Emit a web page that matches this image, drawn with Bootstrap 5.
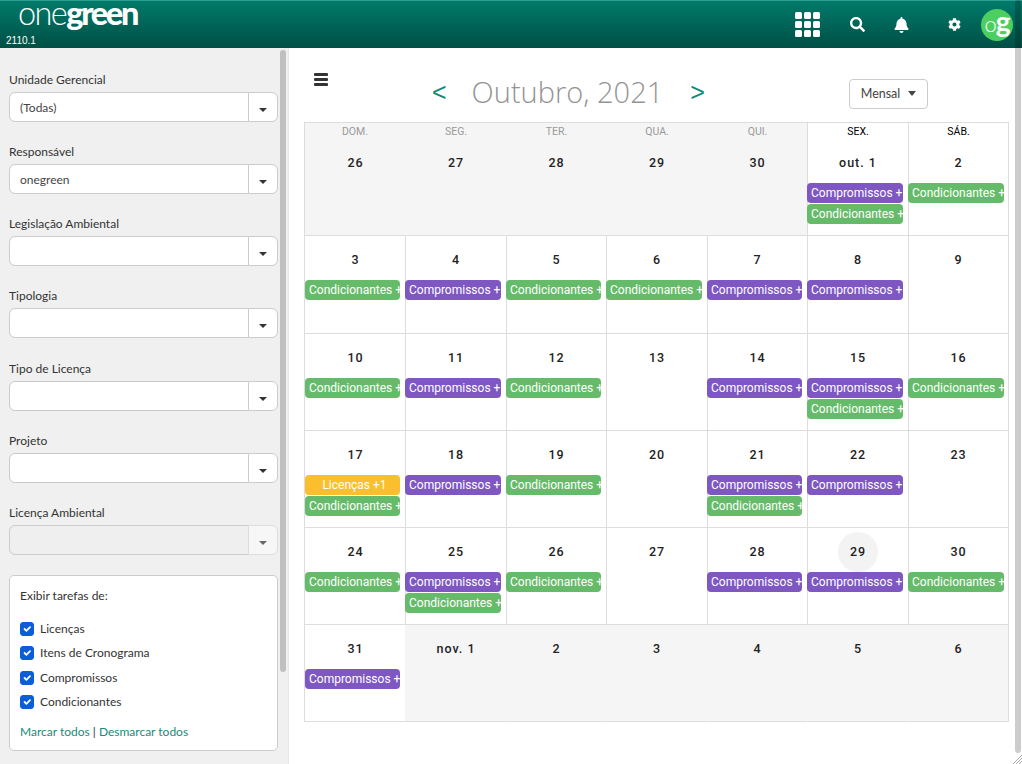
<!DOCTYPE html>
<html lang="pt-BR"><head><meta charset="utf-8"><title>onegreen</title>
<link href="https://cdn.jsdelivr.net/npm/bootstrap@5.3.0/dist/css/bootstrap.min.css" rel="stylesheet">
<style>
html,body{height:764px;overflow:hidden}
body{font-family:Lato,"Noto Sans",sans-serif;font-size:12px;color:#333;background:#fff}
.topo{height:48px;background:linear-gradient(#007a6a,#004f45);border-top:1px solid #2f9c8c;color:#fff}
.logo-wrap{width:170px;padding-left:18px}
.logotipo{font-family:Lato,sans-serif;font-size:32.5px;line-height:34px;letter-spacing:-1.6px;font-weight:300;margin-top:-5px;height:34px}
.logotipo b{font-weight:900;letter-spacing:-2.3px}
.versao{font-family:"Liberation Sans",sans-serif;font-size:10px;line-height:12px;margin:5px 0 0 -12px}
.ico-grade{display:grid;grid-template-columns:repeat(3,7px);gap:2px;width:25px;margin-right:30px}
.ico-grade i{height:7px;background:#fff;border-radius:1.5px}
.ico-topo{fill:#fff;display:block}
.ico-busca{margin-right:29px}
.ico-sino{margin-right:39px}
.avatar{width:32px;height:32px;border-radius:50%;background:#4ccf5f;font-family:Lato,sans-serif;font-size:22px;line-height:25px;letter-spacing:-1px;text-align:center;font-weight:300;margin-left:20px;margin-right:9px}
.avatar b{font-weight:700;font-size:28px}
.corpo{height:716px}
.lateral{width:289px;flex:none;background:#f0f0f0;border-right:1px solid #e6e6e6;padding:23px 10px 0 9px}
.campo{margin-bottom:21.17px}
.campo label{display:block;line-height:18px;margin-bottom:3px;color:#333}
.campo .form-control{height:30px;font-size:12px;padding:0 10px;border-color:#ccc;color:#444;box-shadow:none}
.campo .form-control:disabled{background:#efefef}
.campo .btn{width:30px;height:30px;padding:0;background:#fff;border-color:#ccc;color:#333;font-size:15px}
.campo .btn:disabled{background:#f7f7f7;color:#666;opacity:1;border-color:#ddd}
.campo .dropdown-toggle::after{vertical-align:.05em;margin:0}
.caixa{border-color:#ccc;border-radius:5px;padding:11px 10px 9px;height:176px;margin-top:-1px}
.caixa .titulo{line-height:18px;margin-bottom:11.5px}
.caixa .form-check{min-height:0;height:25px;padding-left:20px;margin:0;display:flex;align-items:center}
.caixa .form-check-input{width:14px;height:14px;margin:0 6px 0 -20px;flex:none}
.caixa .form-check-input:checked{background-color:#0b5ed7;border-color:#0b5ed7}
.caixa .form-check-label{line-height:18px}
.caixa .ligacoes{margin-top:9px;line-height:18px}
.caixa a{color:#1b8a78;text-decoration:none}
.principal{padding:0 12px 0 15px;min-width:0}
.barra{height:74px;position:relative}
.hamb{width:14px;display:flex;flex-direction:column;gap:2px;margin:25px 0 0 10px}
.hamb i{height:3px;background:#333;border-radius:1px}
.navmes{margin-left:104px;margin-top:25px;height:38px}
.navmes a{font-size:25px;line-height:38px;color:#0c8a78;text-decoration:none;font-family:"Liberation Sans",sans-serif}
.navmes h1{font-family:"Open Sans",sans-serif;font-weight:300;font-size:29px;line-height:38px;color:#949494;margin:0 27px 0 25px;white-space:nowrap}
.btn-mensal{width:79px;height:30px;padding:0;font-size:12.5px;background:#fff;border:1px solid #ccc;color:#444;border-radius:4px;margin:31px 82px 0 auto}
.btn-mensal::after{margin-left:8px;border-top-width:5px;border-left-width:4.5px;border-right-width:4.5px;vertical-align:.1em}
.grade{display:grid;grid-template-columns:101px 101px 100px 101px 100px 101px 100px;grid-template-rows:16px 97px 98px 97px 97px 97px 97px;border:1px solid #ddd;border-width:1px 0 0 1px;width:705px}
.cab{font-family:Roboto,sans-serif;font-size:10.5px;line-height:15px;padding-top:1px;text-align:center;border-right:1px solid #ddd;color:#000}
.cab.apagado{color:#999;background:#f5f5f5;border-right-color:#f5f5f5}
.cab.fim-f{border-right-color:#ddd}
.dia{border-right:1px solid #ddd;border-bottom:1px solid #ddd;padding-top:4px;min-width:0}
.dia.fora{background:#f5f5f5;border-right-color:#f5f5f5}
.dia.fim-f,.dia.ult{border-right-color:#ddd}
.dia.sem-linha{border-right-color:#f5f5f5}
.num{font-family:Roboto,sans-serif;font-weight:500;font-size:12.5px;letter-spacing:1px;color:#222;line-height:40px;height:40px;text-align:center}
.dia:nth-child(7n+1) .num{padding-left:1px}
.num span{display:inline-block;min-width:40px;border-radius:50%}
.num .hoje{background:#f3f3f3}
.ev{font-family:Roboto,sans-serif;font-size:12px;line-height:20px;height:20px;color:#fff;border-radius:4px;margin:0 5px 1px -1px;padding:0 0 0 4px;white-space:nowrap;overflow:hidden}
.dia:nth-child(7n+1) .ev{margin-left:0;margin-right:5px}
.dia:nth-child(7n) .ev{margin-right:4px}
.roxo{background:#7e57c2}.verde{background:#66bb6a}
.ambar{background:#fbbf2d;text-align:center}
.rolagem{position:absolute;width:6px;border-radius:3px;background:rgba(0,0,0,.2)}
.rol-lat{left:280px;top:50px;height:622px}
.rol-pag{left:1015px;top:0;height:753px}
.alca{position:absolute;right:0;bottom:0}
</style></head>
<body class="position-relative">
<header class="topo d-flex align-items-center">
 <div class="logo-wrap align-self-start"><div class="logotipo">one<b>green</b></div><div class="versao">2110.1</div></div>
 <div class="ms-auto d-flex align-items-center">
  <div class="ico-grade"><i></i><i></i><i></i><i></i><i></i><i></i><i></i><i></i><i></i></div>
  <svg class="ico-topo ico-busca" width="15" height="15" viewBox="0 0 512 512"><path d="M505 442.7L405.3 343c-4.5-4.5-10.6-7-17-7H372c27.6-35.3 44-79.7 44-128C416 93.1 322.9 0 208 0S0 93.1 0 208s93.1 208 208 208c48.3 0 92.7-16.4 128-44v16.3c0 6.4 2.5 12.5 7 17l99.7 99.7c9.4 9.4 24.6 9.4 33.9 0l28.3-28.3c9.4-9.4 9.4-24.6.1-34zM208 336c-70.7 0-128-57.2-128-128 0-70.7 57.2-128 128-128 70.7 0 128 57.2 128 128 0 70.7-57.2 128-128 128z"/></svg>
  <svg class="ico-topo ico-sino" width="15" height="16" viewBox="0 0 448 512"><path d="M224 512c35.32 0 63.97-28.65 63.97-64H160.03c0 35.35 28.65 64 63.97 64zm215.39-149.71c-19.32-20.76-55.47-51.99-55.47-154.29 0-77.7-54.48-139.9-127.94-155.16V32c0-17.67-14.32-32-31.98-32s-31.98 14.33-31.98 32v20.84C118.56 68.1 64.08 130.3 64.08 208c0 102.3-36.15 133.53-55.47 154.29-6 6.45-8.66 14.16-8.61 21.71.11 16.4 12.98 32 32.1 32h383.8c19.12 0 32-15.6 32.1-32 .05-7.55-2.61-15.27-8.61-21.71z"/></svg>
  <svg class="ico-topo" width="13" height="13" viewBox="0 0 512 512"><path d="M487.4 315.7l-42.6-24.6c4.3-23.2 4.3-47 0-70.2l42.6-24.6c4.9-2.8 7.1-8.6 5.5-14-11.1-35.6-30-67.8-54.7-94.6-3.8-4.1-10-5.1-14.8-2.3L380.8 110c-17.9-15.4-38.5-27.3-60.8-35.1V25.8c0-5.6-3.9-10.5-9.4-11.7-36.7-8.2-74.3-7.8-109.2 0-5.5 1.2-9.4 6.1-9.4 11.7V75c-22.2 7.9-42.8 19.8-60.8 35.1L88.7 85.5c-4.9-2.8-11-1.9-14.8 2.3-24.7 26.7-43.6 58.9-54.7 94.6-1.7 5.4.6 11.2 5.5 14L67.3 221c-4.3 23.2-4.3 47 0 70.2l-42.6 24.6c-4.9 2.8-7.1 8.6-5.5 14 11.1 35.6 30 67.8 54.7 94.6 3.8 4.1 10 5.1 14.8 2.3l42.6-24.6c17.9 15.4 38.5 27.3 60.8 35.1v49.2c0 5.6 3.9 10.5 9.4 11.7 36.7 8.2 74.3 7.8 109.2 0 5.5-1.2 9.4-6.1 9.4-11.7v-49.2c22.2-7.9 42.8-19.8 60.8-35.1l42.6 24.6c4.9 2.8 11 1.9 14.8-2.3 24.7-26.7 43.6-58.9 54.7-94.6 1.5-5.5-.7-11.3-5.6-14.1zM256 336c-44.1 0-80-35.9-80-80s35.9-80 80-80 80 35.9 80 80-35.9 80-80 80z"/></svg>
  <div class="avatar">o<b>g</b></div>
 </div>
</header>
<div class="corpo d-flex">
 <aside class="lateral">
  <div class="campo"><label>Unidade Gerencial</label><div class="input-group"><input class="form-control" value="(Todas)"><button class="btn dropdown-toggle" type="button"></button></div></div>
  <div class="campo"><label>Responsável</label><div class="input-group"><input class="form-control" value="onegreen"><button class="btn dropdown-toggle" type="button"></button></div></div>
  <div class="campo"><label>Legislação Ambiental</label><div class="input-group"><input class="form-control"><button class="btn dropdown-toggle" type="button"></button></div></div>
  <div class="campo"><label>Tipologia</label><div class="input-group"><input class="form-control"><button class="btn dropdown-toggle" type="button"></button></div></div>
  <div class="campo"><label>Tipo de Licença</label><div class="input-group"><input class="form-control"><button class="btn dropdown-toggle" type="button"></button></div></div>
  <div class="campo"><label>Projeto</label><div class="input-group"><input class="form-control"><button class="btn dropdown-toggle" type="button"></button></div></div>
  <div class="campo"><label>Licença Ambiental</label><div class="input-group"><input class="form-control" disabled><button class="btn dropdown-toggle" type="button" disabled></button></div></div>
  <div class="card caixa">
   <div class="titulo">Exibir tarefas de:</div>
   <div class="form-check"><input class="form-check-input" type="checkbox" checked id="c1"><label class="form-check-label" for="c1">Licenças</label></div>
   <div class="form-check"><input class="form-check-input" type="checkbox" checked id="c2"><label class="form-check-label" for="c2">Itens de Cronograma</label></div>
   <div class="form-check"><input class="form-check-input" type="checkbox" checked id="c3"><label class="form-check-label" for="c3">Compromissos</label></div>
   <div class="form-check"><input class="form-check-input" type="checkbox" checked id="c4"><label class="form-check-label" for="c4">Condicionantes</label></div>
   <div class="ligacoes"><a href="#">Marcar todos</a> | <a href="#">Desmarcar todos</a></div>
  </div>
 </aside>
 <main class="principal flex-grow-1">
  <div class="barra d-flex align-items-start">
   <div class="hamb"><i></i><i></i><i></i></div>
   <div class="navmes d-flex align-items-center"><a href="#">&lt;</a><h1>Outubro, 2021</h1><a href="#">&gt;</a></div>
   <button class="btn dropdown-toggle btn-mensal" type="button">Mensal</button>
  </div>
  <div class="grade">
   <div class="cab apagado">DOM.</div><div class="cab apagado">SEG.</div><div class="cab apagado">TER.</div><div class="cab apagado">QUA.</div><div class="cab apagado fim-f">QUI.</div><div class="cab">SEX.</div><div class="cab">SÁB.</div>

   <div class="dia fora"><div class="num"><span>26</span></div></div>
   <div class="dia fora"><div class="num"><span>27</span></div></div>
   <div class="dia fora"><div class="num"><span>28</span></div></div>
   <div class="dia fora"><div class="num"><span>29</span></div></div>
   <div class="dia fora fim-f"><div class="num"><span>30</span></div></div>
   <div class="dia"><div class="num"><span>out. 1</span></div><div class="ev roxo">Compromissos +1</div><div class="ev verde">Condicionantes +1</div></div>
   <div class="dia"><div class="num"><span>2</span></div><div class="ev verde">Condicionantes +1</div></div>

   <div class="dia"><div class="num"><span>3</span></div><div class="ev verde">Condicionantes +1</div></div>
   <div class="dia"><div class="num"><span>4</span></div><div class="ev roxo">Compromissos +1</div></div>
   <div class="dia"><div class="num"><span>5</span></div><div class="ev verde">Condicionantes +1</div></div>
   <div class="dia"><div class="num"><span>6</span></div><div class="ev verde">Condicionantes +1</div></div>
   <div class="dia"><div class="num"><span>7</span></div><div class="ev roxo">Compromissos +1</div></div>
   <div class="dia"><div class="num"><span>8</span></div><div class="ev roxo">Compromissos +1</div></div>
   <div class="dia"><div class="num"><span>9</span></div></div>

   <div class="dia"><div class="num"><span>10</span></div><div class="ev verde">Condicionantes +1</div></div>
   <div class="dia"><div class="num"><span>11</span></div><div class="ev roxo">Compromissos +1</div></div>
   <div class="dia"><div class="num"><span>12</span></div><div class="ev verde">Condicionantes +1</div></div>
   <div class="dia"><div class="num"><span>13</span></div></div>
   <div class="dia"><div class="num"><span>14</span></div><div class="ev roxo">Compromissos +1</div></div>
   <div class="dia"><div class="num"><span>15</span></div><div class="ev roxo">Compromissos +1</div><div class="ev verde">Condicionantes +1</div></div>
   <div class="dia"><div class="num"><span>16</span></div><div class="ev verde">Condicionantes +1</div></div>

   <div class="dia"><div class="num"><span>17</span></div><div class="ev ambar">Licenças +1</div><div class="ev verde">Condicionantes +1</div></div>
   <div class="dia"><div class="num"><span>18</span></div><div class="ev roxo">Compromissos +1</div></div>
   <div class="dia"><div class="num"><span>19</span></div><div class="ev verde">Condicionantes +1</div></div>
   <div class="dia"><div class="num"><span>20</span></div></div>
   <div class="dia"><div class="num"><span>21</span></div><div class="ev roxo">Compromissos +1</div><div class="ev verde">Condicionantes +1</div></div>
   <div class="dia"><div class="num"><span>22</span></div><div class="ev roxo">Compromissos +1</div></div>
   <div class="dia"><div class="num"><span>23</span></div></div>

   <div class="dia"><div class="num"><span>24</span></div><div class="ev verde">Condicionantes +1</div></div>
   <div class="dia"><div class="num"><span>25</span></div><div class="ev roxo">Compromissos +1</div><div class="ev verde">Condicionantes +1</div></div>
   <div class="dia"><div class="num"><span>26</span></div><div class="ev verde">Condicionantes +1</div></div>
   <div class="dia"><div class="num"><span>27</span></div></div>
   <div class="dia"><div class="num"><span>28</span></div><div class="ev roxo">Compromissos +1</div></div>
   <div class="dia"><div class="num"><span class="hoje">29</span></div><div class="ev roxo">Compromissos +1</div></div>
   <div class="dia"><div class="num"><span>30</span></div><div class="ev verde">Condicionantes +1</div></div>

   <div class="dia sem-linha"><div class="num"><span>31</span></div><div class="ev roxo">Compromissos +1</div></div>
   <div class="dia fora"><div class="num"><span>nov. 1</span></div></div>
   <div class="dia fora"><div class="num"><span>2</span></div></div>
   <div class="dia fora"><div class="num"><span>3</span></div></div>
   <div class="dia fora"><div class="num"><span>4</span></div></div>
   <div class="dia fora"><div class="num"><span>5</span></div></div>
   <div class="dia fora ult"><div class="num"><span>6</span></div></div>
  </div>
 </main>
</div>
<div class="rolagem rol-lat"></div>
<div class="rolagem rol-pag"></div>
<svg class="alca" width="10" height="10" viewBox="0 0 10 10"><path d="M10 1L1 10M10 4L4 10M10 7L7 10" stroke="#aaa" stroke-width="1" fill="none"/></svg>
</body></html>
